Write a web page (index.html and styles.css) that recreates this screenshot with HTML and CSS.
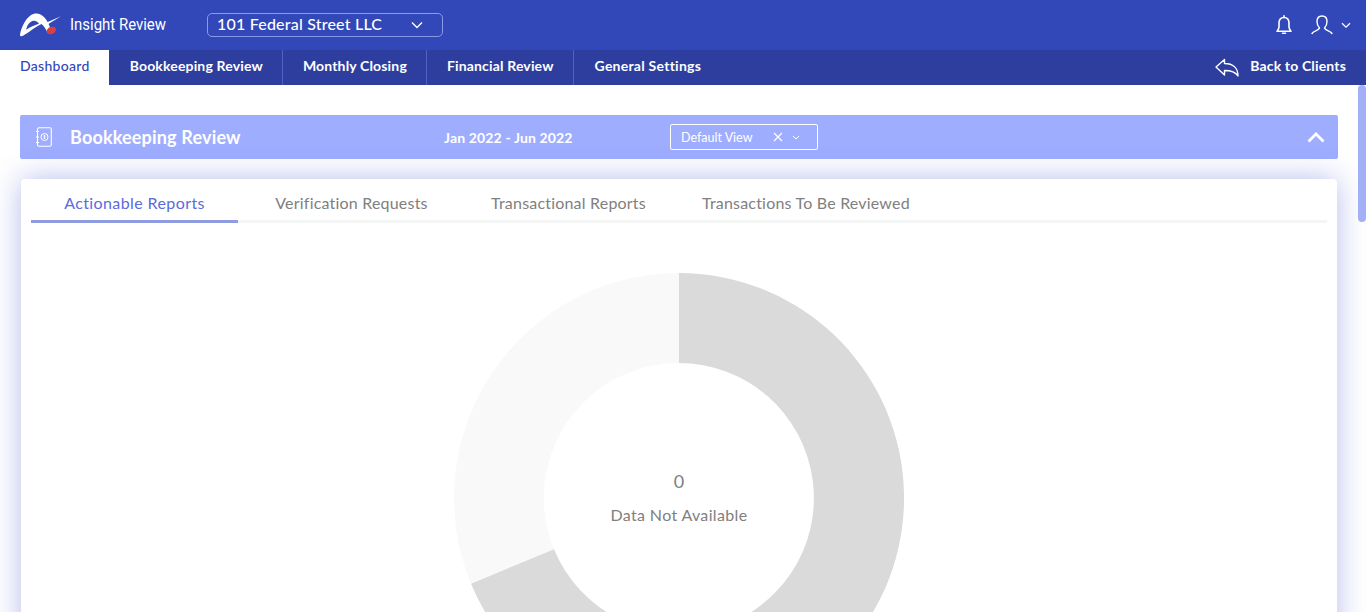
FILE: index.html
```html
<!DOCTYPE html>
<html lang="en">
<head>
  <meta charset="UTF-8">
  <meta name="viewport" content="width=device-width, initial-scale=1">
  <title>Insight Review</title>
  <link rel="stylesheet" href="styles.css">
</head>
<body>
  <header class="topbar">
    <div class="brand">
      <svg class="logo" viewBox="0 0 41 24" width="41" height="24">
        <path fill="#fff" fill-rule="evenodd" d="M0 22C1 14 7 2.500 14 .8 21-1 26.500 5 30 14l-3 4.500c-2-3.500-3.500-6-5.500-7.500C15 14 8 20 3 22.800c-1.500.8-3 .5-3-.8zM7.500 12.500C9.500 9 12 7.500 14.500 7.800c2 .3 3.500 1.500 4.500 2.900-4 1-7.500 2.800-13 6z"/>
        <path fill="#fff" d="M22 11.500 41 3.300 25 13z"/>
        <ellipse cx="31.300" cy="17.500" rx="5" ry="3.500" transform="rotate(-25 31.300 17.500)" fill="#d8413f"/>
      </svg>
      <span class="brand-name">Insight Review</span>
    </div>
    <div class="client-select">
      <span>101 Federal Street LLC</span>
      <svg viewBox="0 0 12 8" width="12" height="8"><path d="M1 1.500 6 6.500l5-5" fill="none" stroke="#fff" stroke-width="1.400"/></svg>
    </div>
    <div class="top-icons">
      <svg viewBox="0 0 18 20" width="18" height="20"><path d="M9 2.500C5.500 2.500 4 5 4 8v4c0 2-1 3-2 4.200h14c-1-1.200-2-2.200-2-4.200V8c0-3-1.500-5.500-5-5.500z" fill="none" stroke="#fff" stroke-width="1.600" stroke-linejoin="round"/><path d="M9 .8v1.500M7.500 18.200h3" stroke="#fff" stroke-width="1.600" stroke-linecap="round"/></svg>
      <svg class="user-icon" viewBox="0 0 22 20" width="22" height="20"><path d="M1 18.500c2-3 7-3 7.500-5.500C7 11.500 6 9.500 6 6.500 6 3 8 1 11 1s5 2 5 5.500c0 3-1 5-2.500 6.500.5 2.500 5.500 2.500 7.500 5.500" fill="none" stroke="#fff" stroke-width="1.400" stroke-linecap="round" stroke-linejoin="round"/></svg>
      <svg class="user-caret" viewBox="0 0 10 7" width="10" height="7"><path d="M1 1.200 5 5.200l4-4" fill="none" stroke="#fff" stroke-width="1.300"/></svg>
    </div>
  </header>

  <nav class="navbar">
    <a class="nav-item active">Dashboard</a>
    <a class="nav-item">Bookkeeping Review</a>
    <a class="nav-item">Monthly Closing</a>
    <a class="nav-item">Financial Review</a>
    <a class="nav-item last">General Settings</a>
    <a class="back-link">
      <svg viewBox="0 0 24 19" width="24" height="19"><path d="M1 9 9.500 1.500v4C18 5.500 23 10 23 18c-2.500-4-6-5.500-13.500-5.500V17z" fill="none" stroke="#fff" stroke-width="1.400" stroke-linejoin="round"/></svg>
      <span>Back to Clients</span>
    </a>
  </nav>

  <main class="content">
    <div class="scroll-thumb"></div>
    <section class="banner">
      <svg class="book-icon" viewBox="0 0 16 20" width="16" height="20">
        <rect x="1.500" y=".7" width="13.800" height="18.600" rx="1.500" fill="none" stroke="#fff" stroke-width="1.100"/>
        <path d="M0 4.500h3M0 10h3M0 15.500h3" stroke="#fff" stroke-width="1.100"/>
        <circle cx="8.500" cy="10" r="3.500" fill="none" stroke="#fff" stroke-width="1"/>
        <path d="M8.500 8v4" stroke="#fff" stroke-width="1.400"/>
      </svg>
      <h1 class="banner-title">Bookkeeping Review</h1>
      <div class="banner-date">Jan 2022 - Jun 2022</div>
      <div class="view-select">
        <span>Default View</span>
        <svg class="view-x" viewBox="0 0 10 10" width="10" height="10"><path d="M1 1l8 8M9 1 1 9" stroke="#fff" stroke-width="1.200"/></svg>
        <svg class="view-caret" viewBox="0 0 8 5" width="8" height="5"><path d="M1 1 4 4l3-3" fill="none" stroke="#fff" stroke-width="1"/></svg>
      </div>
      <svg class="collapse" viewBox="0 0 18 11" width="18" height="11"><path d="M1.500 9.500 9 2l7.500 7.500" fill="none" stroke="#fff" stroke-width="2.800"/></svg>
    </section>

    <section class="card">
      <div class="tabs">
        <div class="tab active">Actionable Reports</div>
        <div class="tab">Verification Requests</div>
        <div class="tab">Transactional Reports</div>
        <div class="tab">Transactions To Be Reviewed</div>
      </div>
      <div class="chart">
        <svg viewBox="0 0 450 450" width="450" height="450">
          <path fill="#f9f9f9" d="M225 0A225 225 0 0 0 17 310.700L100 276.300A135 135 0 0 1 225 90z"/>
          <path fill="#dadada" d="M225 0A225 225 0 1 1 17 310.700L100 276.300A135 135 0 1 0 225 90z"/>
        </svg>
        <div class="chart-label">
          <div class="chart-num">0</div>
          <div class="chart-text">Data Not Available</div>
        </div>
      </div>
    </section>
  </main>
</body>
</html>
```

FILE: styles.css
```css
* {
  box-sizing: border-box;
}

html, body {
  height: 100%;
}

body {
  margin: 0;
  font-family: 'Lato', 'Noto Sans', sans-serif;
  color: #fff;
  background: #fff;
  display: flex;
  flex-direction: column;
  overflow: hidden;
}

.topbar {
  height: 50px;
  flex: none;
  background: #3247b8;
  display: flex;
  align-items: center;
  padding: 0 15px 0 20px;
}

.brand {
  display: flex;
  align-items: center;
  width: 187px;
}

.logo {
  margin-right: 9px;
}

.brand-name {
  font-family: 'Roboto', sans-serif;
  font-size: 17px;
  margin-top: -3px;
  transform: scaleX(0.88);
  transform-origin: left center;
}

.client-select {
  width: 236px;
  height: 24px;
  border: 1px solid #8b9ae6;
  border-radius: 5px;
  display: flex;
  align-items: center;
  justify-content: space-between;
  padding: 0 19px 3px 9px;
  font-size: 16px;
  font-weight: 500;
  letter-spacing: 0.2px;
}

.client-select svg {
  margin-top: 3px;
}

.top-icons {
  margin-left: auto;
  display: flex;
  align-items: center;
}

.user-icon {
  margin-left: 18px;
}

.user-caret {
  margin-left: 8px;
}

.navbar {
  height: 35px;
  flex: none;
  background: #2d3e9f;
  display: flex;
  align-items: center;
  font-size: 14px;
  font-weight: 700;
  letter-spacing: 0.16px;
}

.nav-item {
  height: 100%;
  padding: 0 19px 5px 20px;
  display: flex;
  align-items: center;
  border-right: 1px solid #5060c4;
}

.nav-item.active {
  background: #fff;
  color: #3346b8;
  font-weight: 500;
  letter-spacing: 0.3px;
  border-right: 0;
  margin-right: 1px;
}

.nav-item.last {
  border-right: 0;
  padding-left: 21px;
  letter-spacing: 0.25px;
}

.back-link {
  margin-left: auto;
  padding: 0 20px 5px 0;
  display: flex;
  align-items: center;
  gap: 11px;
}

.back-link svg {
  margin-top: 5px;
}

.content {
  flex: 1;
  position: relative;
  overflow: hidden;
  padding: 30px 28px 0 20px;
}

.scroll-thumb {
  position: absolute;
  top: 0;
  right: 0;
  width: 8px;
  height: 137px;
  background: #a3b0f8;
  border-radius: 4px;
}

.banner {
  height: 44px;
  background: #9fadff;
  border-radius: 2px;
  display: flex;
  align-items: center;
  padding-left: 16px;
}

.book-icon {
  flex: none;
  margin-right: 18px;
}

.banner-title {
  margin: 0;
  width: 374px;
  font-size: 18px;
  font-weight: 700;
  letter-spacing: 0.17px;
}

.banner-date {
  width: 226px;
  font-size: 14px;
  font-weight: 700;
  letter-spacing: 0.15px;
}

.view-select {
  width: 148px;
  height: 26px;
  border: 1px solid #fff;
  border-radius: 2px;
  display: flex;
  align-items: center;
  padding-left: 10px;
  font-size: 12.5px;
}

.view-x {
  margin-left: auto;
}

.view-caret {
  margin: 0 17px 0 9px;
}

.collapse {
  margin-left: auto;
  margin-right: 13px;
}

.card {
  margin: 20px 1px 0;
  height: 1900px;
  background: #fff;
  border-radius: 4px;
  padding: 0 10px;
  box-shadow: 0 0 30px rgba(70, 90, 210, 0.4);
}

.tabs {
  display: flex;
  gap: 10px;
  height: 44px;
  border-bottom: 3px solid #f4f5f5;
}

.tab {
  min-width: 207px;
  height: 44px;
  padding: 6px 20px 0;
  display: flex;
  align-items: center;
  justify-content: center;
  font-size: 16px;
  letter-spacing: 0.2px;
  color: #808080;
  border-bottom: 3px solid transparent;
}

.tab.active {
  color: #5a6bdd;
  letter-spacing: 0.4px;
  border-bottom-color: #8f9de0;
}

.chart {
  position: relative;
  width: 450px;
  margin: 50px auto 0;
}

.chart svg {
  display: block;
}

.chart-label {
  position: absolute;
  left: 0;
  right: 0;
  top: 196px;
  text-align: center;
  color: #808080;
}

.chart-num {
  font-size: 18px;
  line-height: 24px;
}

.chart-text {
  margin-top: 12px;
  font-size: 16px;
  letter-spacing: 0.35px;
  line-height: 20px;
}
```
